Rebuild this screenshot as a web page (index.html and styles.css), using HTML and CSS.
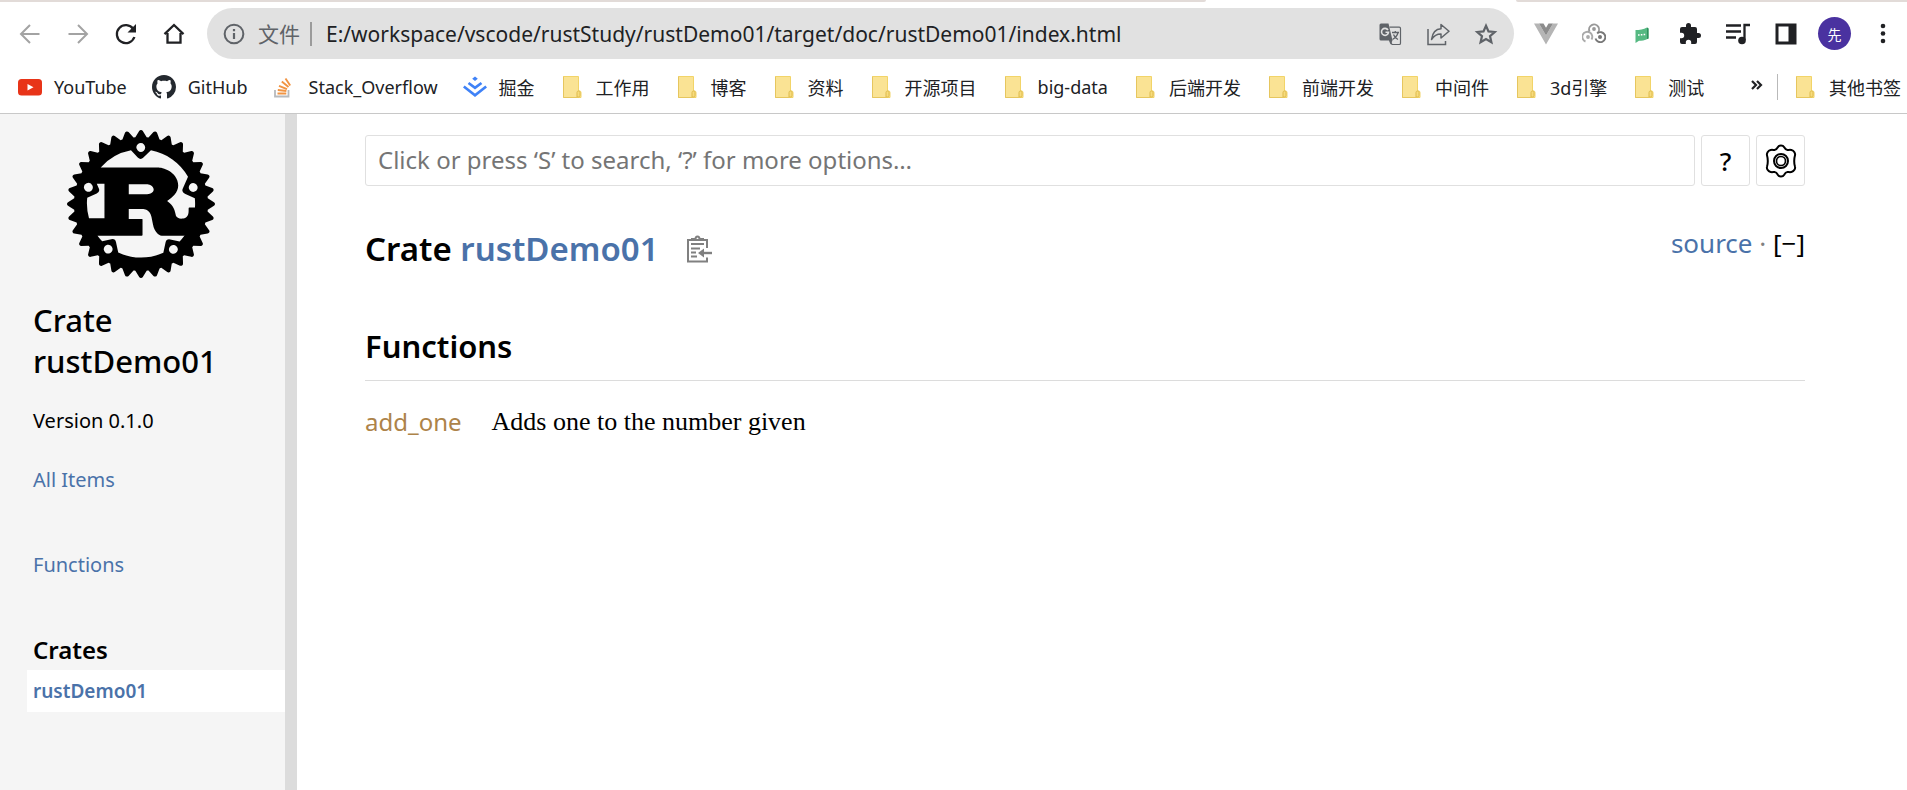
FILE: index.html
```html
<!DOCTYPE html>
<html lang="zh-CN">
<head>
<meta charset="utf-8">
<title>rustDemo01 - Rust</title>
<link rel="stylesheet" href="styles.css">
</head>
<body>
<svg class="sprite" aria-hidden="true">
  <symbol id="folder" viewBox="0 0 24 24"><path d="M3.5 1.500h15v14.500c2-.5 2.500.5 2.500 2v4.500h-17.500z" fill="#fae394" stroke="#f2d468"/><path d="M17 22v-4.500c0-2 3-2 3 0v3c0 1-.8 1.500-1.500 1.500z" fill="#f7dc7c" stroke="#dfba4d"/><path d="M3.500 1.500v21h14" fill="none" stroke="#e6c65e"/></symbol>
</svg>

<header class="browser">
  <div class="tabstrip"><span class="tab-rest"></span><span class="tab-active"></span><span class="tab-tail"></span></div>
  <div class="toolbar">
    <nav class="nav-buttons" aria-label="导航">
      <button class="icon-btn" aria-label="后退"><svg viewBox="0 0 24 24"><path d="M21.500 12H3M12 3l-9 9 9 9" fill="none" stroke="#a3a3a3" stroke-width="2"/></svg></button>
      <button class="icon-btn" aria-label="前进"><svg viewBox="0 0 24 24"><path d="M2.500 12H21M12 3l9 9-9 9" fill="none" stroke="#a3a3a3" stroke-width="2"/></svg></button>
      <button class="icon-btn" aria-label="刷新"><svg viewBox="0 0 24 24"><path d="M19.300 7A9 9 0 1 0 20.400 15" fill="none" stroke="#202124" stroke-width="2.300"/><path d="M22 2v8.500h-8.500z" fill="#202124"/></svg></button>
      <button class="icon-btn" aria-label="主页"><svg viewBox="0 0 24 24"><path d="M5.500 11v9.700h13V11M2.500 12.200 12 3l9.500 9.200" fill="none" stroke="#202124" stroke-width="2.300"/></svg></button>
    </nav>
    <div class="omnibox">
      <svg class="info" viewBox="0 0 24 24"><circle cx="12" cy="12" r="10.200" fill="none" stroke="#5f6368" stroke-width="2.200"/><path d="M12 11v6.500M12 6.500v2.500" stroke="#5f6368" stroke-width="2.400"/></svg>
      <label class="scheme" for="url">文件</label>
      <input class="url" id="url" type="text" value="E:/workspace/vscode/rustStudy/rustDemo01/target/doc/rustDemo01/index.html">
      <button class="icon-btn" aria-label="翻译"><svg viewBox="0 0 24 24"><path d="M11.500 5.200H21.200a1.300 1.300 0 0 1 1.300 1.300v14.700a1.300 1.300 0 0 1-1.300 1.300H14l-2-4" fill="none" stroke="#5f6368" stroke-width="1.200"/><path d="M3 1.500h7.500l4 17H3A1.500 1.500 0 0 1 1.500 17V3A1.500 1.500 0 0 1 3 1.500zM11 18.500h3.500l-2 4z" fill="#5f6368"/><path d="M10 8a3.500 3.500 0 1 0 .5 2.200H7.500" fill="none" stroke="#e1e1e1" stroke-width="1.600"/><path d="M14 10.500h7M17.300 9v1.500M20 10.500c-.7 3.500-3 5.500-5.500 7M15.500 12.500c.8 2.200 2.500 4 4.500 5" fill="none" stroke="#5f6368" stroke-width="1.300"/></svg></button>
      <button class="icon-btn" aria-label="分享"><svg viewBox="0 0 24 24"><path d="M2 7v15.500h17.500V19" fill="none" stroke="#5f6368" stroke-width="1.500"/><path d="M15 2.500v4.300C9.500 7 6.500 10.500 5.500 17.500c2.500-4 5.500-5.500 9.500-5.500v4l8-6.800z" fill="none" stroke="#5f6368" stroke-width="1.500" stroke-linejoin="round"/></svg></button>
      <button class="icon-btn" aria-label="收藏"><svg viewBox="0 0 24 24"><path d="M12 3.700l2.500 5.700 6.200.6-4.700 4.100 1.400 6.100L12 17l-5.400 3.200L8 14.100 3.300 10l6.200-.6z" fill="none" stroke="#5f6368" stroke-width="2.200"/></svg></button>
    </div>
    <div class="extensions">
      <button class="icon-btn" aria-label="Vue"><svg viewBox="0 0 24 24"><path d="M0 1.500h5L12 13.500l7-12h5L12 22.500z" fill="#b5b5b5"/><path d="M5 1.500h4.500L12 5.800l2.500-4.300H19l-7 12z" fill="#8c8c8c"/></svg></button>
      <button class="icon-btn" aria-label="扩展"><svg viewBox="0 0 24 24"><g fill="none" stroke-width="1.900"><path d="M3.500 19.500a5 5 0 1 1 6-2" stroke="#aaa"/><path d="M7.500 9.500a5 5 0 1 1 7.500 2" stroke="#999"/><path d="M15.500 11a5 5 0 1 1-2 5.500" stroke="#777"/></g><circle cx="6" cy="15" r="1.900" fill="#aaa"/><circle cx="12" cy="7" r="1.900" fill="#999"/><circle cx="18" cy="15" r="2" fill="#777"/></svg></button>
      <button class="icon-btn" aria-label="聊天"><svg viewBox="0 0 24 24"><path d="M5.500 8c4 0 8-.5 11.500-2.500l1.500 1v10c-4 2-7 2.300-9.500 2.300L5.500 21z" fill="#55b982"/><path d="M17 5.500l1.500 1v10l-1.500.5z" fill="#2f8f5d"/><path d="M8 13h1.600m1.200-.2h1.600m1.200-.3h1.600" stroke="#fff" stroke-width="1.500"/></svg></button>
      <button class="icon-btn" aria-label="扩展程序"><svg viewBox="0 0 24 24"><path d="M20.500 11H19V7a2 2 0 0 0-2-2h-4V3.500a2.500 2.500 0 0 0-5 0V5H4a2 2 0 0 0-2 2v3.800h1.500a2.700 2.700 0 0 1 0 5.400H2V20a2 2 0 0 0 2 2h3.800v-1.500a2.700 2.700 0 0 1 5.400 0V22H17a2 2 0 0 0 2-2v-4h1.500a2.500 2.500 0 0 0 0-5z" fill="#202124"/></svg></button>
      <button class="icon-btn" aria-label="媒体控制"><svg viewBox="0 0 24 24"><path d="M0 3.500h15M0 9.500h15M0 15.500h10M24 3h-5.500v15" fill="none" stroke="#202124" stroke-width="2.300"/><circle cx="16" cy="18.500" r="3.800" fill="#202124"/></svg></button>
      <button class="icon-btn" aria-label="侧边栏"><svg viewBox="0 0 24 24"><path d="M1.500 1.500h21v21h-21zM4.500 4.500v15h10v-15z" fill="#202124" fill-rule="evenodd"/></svg></button>
      <button class="avatar" aria-label="个人资料">先</button>
      <button class="icon-btn" aria-label="菜单"><svg viewBox="0 0 24 24" fill="#202124"><circle cx="12" cy="4" r="2.300"/><circle cx="12" cy="11.500" r="2.300"/><circle cx="12" cy="19" r="2.300"/></svg></button>
    </div>
  </div>
  <nav class="bookmarks" aria-label="书签">
    <a class="bookmark" href="#"><svg viewBox="0 0 24 24"><rect y="4" width="24" height="16.500" rx="3.500" fill="#e83418"/><path d="M9.500 9v6.500l6-3.200z" fill="#fff"/></svg>YouTube</a>
    <a class="bookmark" href="#"><svg viewBox="0 0 16 16"><path d="M8 0C3.580 0 0 3.580 0 8c0 3.540 2.290 6.530 5.470 7.590.4.070.55-.17.550-.38 0-.19-.01-.82-.01-1.490-2.010.37-2.530-.49-2.690-.94-.09-.23-.48-.94-.82-1.130-.28-.15-.68-.52-.01-.53.630-.01 1.080.58 1.230.82.720 1.210 1.870.87 2.330.66.070-.52.280-.87.510-1.070-1.780-.2-3.640-.89-3.640-3.950 0-.87.310-1.590.82-2.150-.08-.2-.36-1.020.08-2.120 0 0 .67-.21 2.200.82.640-.18 1.320-.27 2-.27s1.360.09 2 .27c1.530-1.040 2.200-.82 2.200-.82.440 1.100.160 1.920.080 2.120.510.560.820 1.270.820 2.150 0 3.070-1.870 3.750-3.650 3.950.290.250.540.730.540 1.480 0 1.070-.01 1.930-.01 2.200 0 .21.150.46.550.38A8.010 8.010 0 0 0 16 8c0-4.420-3.580-8-8-8z" fill="#24292f"/></svg>GitHub</a>
    <a class="bookmark" href="#"><svg viewBox="0 0 24 24"><path d="M2 15v6.500h13.500V15" fill="none" stroke="#b7babd" stroke-width="1.800"/><path d="M4.500 18.500h8.800M4.800 15l8.600 1M6 10.800l8 3.400M8.800 6.500l6.700 5.500M12.500 3.500l4.700 7" stroke="#f19443" stroke-width="1.900"/></svg>Stack_Overflow</a>
    <a class="bookmark" href="#"><svg viewBox="0 0 24 24"><path d="M12 1.500l2.800 2.200L12 6 9.200 3.700z" fill="#3f82f7"/><path d="M5.500 8l6.500 4.800L18.500 8M.8 11.500l11.200 8.800 11.200-8.800" fill="none" stroke="#3f82f7" stroke-width="2.700"/></svg>掘金</a>
    <a class="bookmark" href="#"><svg><use href="#folder"/></svg>工作用</a>
    <a class="bookmark" href="#"><svg><use href="#folder"/></svg>博客</a>
    <a class="bookmark" href="#"><svg><use href="#folder"/></svg>资料</a>
    <a class="bookmark" href="#"><svg><use href="#folder"/></svg>开源项目</a>
    <a class="bookmark" href="#"><svg><use href="#folder"/></svg>big-data</a>
    <a class="bookmark" href="#"><svg><use href="#folder"/></svg>后端开发</a>
    <a class="bookmark" href="#"><svg><use href="#folder"/></svg>前端开发</a>
    <a class="bookmark" href="#"><svg><use href="#folder"/></svg>中间件</a>
    <a class="bookmark" href="#"><svg><use href="#folder"/></svg>3d引擎</a>
    <a class="bookmark" href="#"><svg><use href="#folder"/></svg>测试</a>
    <div class="bookmarks-end">
      <button class="icon-btn" aria-label="更多书签"><svg viewBox="0 0 24 24"><path d="M7 6l4 4-4 4M12 6l4 4-4 4" fill="none" stroke="#202124" stroke-width="2.200"/></svg></button>
      <a class="bookmark other" href="#"><svg><use href="#folder"/></svg>其他书签</a>
    </div>
  </nav>
</header>

<div class="page">
  <nav class="sidebar" aria-label="Crate">
    <a class="logo" href="#" aria-label="Rust"><svg viewBox="0 0 24 24"><path d="M23.8346 11.7033l-1.0073-.6236a13.7268 13.7268 0 00-.0283-.2936l.8656-.8069a.3483.3483 0 00-.1154-.578l-1.1066-.414a8.4958 8.4958 0 00-.087-.2856l.6904-.9587a.3462.3462 0 00-.2257-.5446l-1.1663-.1894a9.3574 9.3574 0 00-.1407-.2622l.49-1.0761a.3437.3437 0 00-.0274-.3361.3486.3486 0 00-.3006-.154l-1.1845.0416a6.7444 6.7444 0 00-.1873-.2268l.2723-1.153a.3472.3472 0 00-.417-.4172l-1.1532.2724a14.0183 14.0183 0 00-.2278-.1873l.0415-1.1845a.3442.3442 0 00-.49-.328l-1.076.491c-.0872-.0476-.1742-.0952-.2623-.1407l-.1903-1.1673A.3483.3483 0 0016.256.955l-.9597.6905a8.4867 8.4867 0 00-.2855-.086l-.414-1.1066a.3483.3483 0 00-.5781-.1154l-.8069.8666a9.2936 9.2936 0 00-.2936-.0284L12.2946.1683a.3462.3462 0 00-.5892 0l-.6236 1.0073a13.7383 13.7383 0 00-.2936.0284L9.9803.3374a.3462.3462 0 00-.578.1154l-.4141 1.1065c-.0962.0274-.1903.0567-.2855.086L7.744.955a.3483.3483 0 00-.5447.2258L7.009 2.348a9.3574 9.3574 0 00-.2622.1407l-1.0762-.491a.3462.3462 0 00-.49.328l.0416 1.1845a7.9826 7.9826 0 00-.2278.1873L3.8413 3.425a.3472.3472 0 00-.4171.4171l.2713 1.1531c-.0628.075-.1255.1509-.1863.2268l-1.1845-.0415a.3462.3462 0 00-.328.49l.491 1.0761a9.167 9.167 0 00-.1407.2622l-1.1662.1894a.3483.3483 0 00-.2258.5446l.6904.9587a13.303 13.303 0 00-.087.2855l-1.1065.414a.3483.3483 0 00-.1155.5781l.8656.807a9.2936 9.2936 0 00-.0283.2935l-1.0073.6236a.3442.3442 0 000 .5892l1.0073.6236c.008.0982.0182.1964.0283.2936l-.8656.8079a.3462.3462 0 00.1155.578l1.1065.4141c.0273.0962.0567.1914.087.2855l-.6904.9587a.3452.3452 0 00.2268.5447l1.1662.1893c.0456.088.0922.1751.1408.2622l-.491 1.0762a.3462.3462 0 00.328.49l1.1834-.0415c.0618.0769.1235.1528.1873.2277l-.2713 1.1541a.3462.3462 0 00.4171.4161l1.153-.2713c.075.0638.151.1255.2279.1863l-.0415 1.1845a.3442.3442 0 00.49.327l1.0761-.49c.087.0486.1741.0951.2622.1407l.1903 1.1662a.3483.3483 0 00.5447.2268l.9587-.6904a9.299 9.299 0 00.2855.087l.414 1.1066a.3452.3452 0 00.5781.1154l.8079-.8656c.0972.0111.1954.0203.2936.0294l.6236 1.0073a.3472.3472 0 00.5892 0l.6236-1.0073c.0982-.0091.1964-.0183.2936-.0294l.8069.8656a.3483.3483 0 00.578-.1154l.4141-1.1066a8.4626 8.4626 0 00.2855-.087l.9587.6904a.3452.3452 0 00.5447-.2268l.1903-1.1662c.088-.0456.1751-.0931.2622-.1407l1.0762.49a.3472.3472 0 00.49-.327l-.0415-1.1845a6.7267 6.7267 0 00.2267-.1863l1.1531.2713a.3472.3472 0 00.4171-.416l-.2713-1.1542c.0628-.0749.1255-.1508.1863-.2278l1.1845.0415a.3442.3442 0 00.328-.49l-.49-1.076c.0475-.0872.0951-.1742.1407-.2623l1.1662-.1893a.3483.3483 0 00.2258-.5447l-.6904-.9587.087-.2855 1.1066-.414a.3462.3462 0 00.1154-.5781l-.8656-.8079c.0101-.0972.0202-.1954.0283-.2936l1.0073-.6236a.3442.3442 0 000-.5892zm-6.7413 8.3551a.7138.7138 0 01.2986-1.396.714.714 0 11-.2997 1.396zm-.3422-2.3142a.649.649 0 00-.7715.5l-.3573 1.6685c-1.1035.501-2.3285.7795-3.6193.7795a8.7368 8.7368 0 01-3.6951-.814l-.3574-1.6684a.648.648 0 00-.7714-.499l-1.473.3158a8.7216 8.7216 0 01-.7613-.898h7.1676c.081 0 .1356-.0141.1356-.088v-2.536c0-.074-.0536-.0881-.1356-.0881h-2.0966v-1.6077h2.2677c.2065 0 1.1065.0587 1.394 1.2088.0901.3533.2875 1.5044.4232 1.8729.1346.413.6833 1.2381 1.2685 1.2381h3.5716a.7492.7492 0 00.1296-.0131 8.7874 8.7874 0 01-.8119.9526zM6.8369 20.024a.714.714 0 11-.2997-1.396.714.714 0 01.2997 1.396zM4.1177 8.9972a.7137.7137 0 11-1.304.5791.7137.7137 0 011.304-.579zm-.8352 1.9813l1.5347-.6824a.65.65 0 00.33-.8585l-.3158-.7147h1.2432v5.6025H3.5669a8.7753 8.7753 0 01-.2834-3.348zm6.7343-.5437V8.7836h2.9601c.153 0 1.0792.1772 1.0792.8697 0 .575-.7107.7815-1.2948.7815zm10.7574 1.4862c0 .2187-.008.4363-.0243.651h-.9c-.09 0-.1265.0586-.1265.1477v.413c0 .973-.5487 1.1846-1.0296 1.2382-.4576.0517-.9648-.1913-1.0275-.4717-.2704-1.5186-.7198-1.8436-1.4305-2.4034.8817-.5599 1.799-1.386 1.799-2.4915 0-1.1936-.819-1.9458-1.3769-2.3153-.7825-.5163-1.6491-.6195-1.883-.6195H5.4682a8.7651 8.7651 0 014.907-2.7699l1.0974 1.151a.648.648 0 00.9182.0213l1.227-1.1743a8.7753 8.7753 0 016.0044 4.2762l-.8403 1.8982a.652.652 0 00.33.8585l1.6178.7188c.0283.2875.0425.577.0425.8717zm-9.3006-9.5993a.7128.7128 0 11.984 1.0316.7137.7137 0 01-.984-1.0316zm8.3389 6.71a.7107.7107 0 01.9395-.3625.7137.7137 0 11-.9405.3635z"/></svg></a>
    <h2 class="crate-name"><a href="#">Crate rustDemo01</a></h2>
    <ul class="side-list">
      <li class="version">Version 0.1.0</li>
      <li><a href="#">All Items</a></li>
    </ul>
    <ul class="side-list sections">
      <li><a href="#functions">Functions</a></li>
    </ul>
    <h3 class="crates-title">Crates</h3>
    <a class="current-crate" href="#">rustDemo01</a>
  </nav>
  <div class="resizer"></div>
  <main class="content">
    <form class="search">
      <input class="search-input" type="search" aria-label="Search" placeholder="Click or press ‘S’ to search, ‘?’ for more options…">
      <button class="square-btn" type="button" aria-label="Help">?</button>
      <button class="square-btn" type="button" aria-label="Settings"><svg viewBox="0 0 34 34" fill="none" stroke="#000"><path d="M17 1.500c1.300 0 2.500.5 3.200 1.800.8 1.600 1.800 2.500 3.300 2.600 1.300.1 2.500-.2 3.900.1 2.600.6 4.300 3.300 3.500 5.800-.5 1.700-.7 3.200-.7 5.200s.2 3.500.7 5.200c.8 2.500-.9 5.200-3.500 5.800-1.400.3-2.600 0-3.900.1-1.500.1-2.500 1-3.300 2.600-.7 1.300-1.900 1.800-3.200 1.800s-2.500-.5-3.200-1.800c-.8-1.600-1.800-2.500-3.300-2.600-1.300-.1-2.500.2-3.900-.1-2.600-.6-4.300-3.300-3.500-5.800.5-1.700.7-3.200.7-5.200s-.2-3.500-.7-5.200c-.8-2.500.9-5.200 3.500-5.800 1.400-.3 2.600 0 3.900-.1 1.500-.1 2.500-1 3.300-2.600.7-1.300 1.900-1.800 3.200-1.800z" stroke-width="2"/><circle cx="17" cy="17" r="7" stroke-width="2"/><circle cx="17" cy="17" r="4.500" stroke-width="1.700"/></svg></button>
    </form>
    <div class="heading">
      <h1 class="title">Crate <a href="#">rustDemo01</a></h1>
      <button class="copy" aria-label="Copy item path"><svg viewBox="0 0 26 28" fill="none" stroke="#808080" stroke-width="2"><path d="M21 13V5H2v21.500h19V22.500M5 9h13"/><path d="M6 5.500V4h3.500c0-3.500 4-3.500 4 0H17v1.500"/><path d="M5 13.500h9M5 17.500h5M5 21.500h6" stroke-width="1.800"/><path d="M26 18h-9" stroke-width="2.400"/><path d="M18 13.500L12 18l6 4.500z" fill="#808080" stroke="none"/></svg></button>
      <div class="out-of-band"><a href="#">source</a> · <button class="toggle">[<span>−</span>]</button></div>
    </div>
    <h2 class="section-title" id="functions">Functions</h2>
    <ul class="items">
      <li class="item"><a href="#">add_one</a><span class="desc">Adds one to the number given</span></li>
    </ul>
  </main>
</div>
</body>
</html>
```
FILE: styles.css
```css
* { box-sizing: border-box; }
body {
  margin: 0;
  min-height: 100vh;
  display: flex;
  flex-direction: column;
  background: #fff;
  color: #000;
  font-family: "Noto Sans", "Noto Sans CJK SC", sans-serif;
}
a { color: #4a72a9; text-decoration: none; }
button { border: 0; padding: 0; background: none; font: inherit; color: inherit; cursor: pointer; }
ul { margin: 0; padding: 0; list-style: none; }
svg { display: block; }
.sprite { width: 0; height: 0; position: absolute; }

.browser { border-bottom: 1px solid #c8c8c8; color: #202124; }
.tabstrip { display: flex; height: 2px; }
.tab-rest { flex: 1206; background: #e2dbd8; border-bottom-right-radius: 2px; }
.tab-active { flex: 310; }
.tab-tail { flex: 391; background: #e2dbd8; border-bottom-left-radius: 2px; }
.toolbar { display: flex; align-items: center; height: 63px; padding: 0 12px 0 18px; }
.nav-buttons { display: flex; gap: 24px; }
.icon-btn { width: 24px; height: 24px; flex: none; }
.icon-btn svg { width: 24px; height: 24px; }
.omnibox {
  flex: 1;
  display: flex;
  align-items: center;
  height: 51px;
  margin: 0 20px 0 21px;
  padding: 0 16px;
  border-radius: 26px;
  background: #e1e1e1;
  font-size: 21px;
}
.omnibox .icon-btn { margin-left: 24px; }
.info { width: 22px; height: 22px; margin-right: 13px; }
.scheme { color: #5f6368; padding-right: 10px; border-right: 2px solid #9b9b9b; line-height: 24px; }
.url {
  flex: 1;
  min-width: 0;
  border: 0;
  outline: 0;
  background: none;
  padding: 0 14px;
  font: inherit;
  color: #202124;
}
.extensions { display: flex; align-items: center; gap: 24px; }
.avatar { width: 33px; height: 33px; margin: 0 -4px; border-radius: 50%; background: #4a32a0; color: #fff; font-size: 14px; }
.bookmarks { display: flex; align-items: center; gap: 25px; height: 48px; padding: 0 6px 4px 18px; font-size: 18px; }
.bookmark { display: flex; align-items: center; gap: 12px; flex: none; color: #202124; white-space: nowrap; }
.bookmark svg { width: 24px; height: 24px; }
.bookmarks-end { display: flex; align-items: center; gap: 8px; margin-left: auto; }
.other { padding-left: 15px; border-left: 1px solid #b9b9b9; }

.page { flex: 1; display: flex; }
.sidebar { width: 285px; flex: none; background: #f5f5f5; padding: 16px 0 0 33px; font-size: 20px; }
.resizer { width: 12px; flex: none; background: #dcdcdc; }
.logo { display: block; width: 148px; margin: 0 0 22px 34px; }
.logo svg { width: 148px; height: 148px; }
.crate-name { margin: 0; font-size: 31px; font-weight: 500; line-height: 41px; max-width: 220px; }
.crate-name a { color: #000; }
.side-list { line-height: 29px; }
.side-list li + li { margin-top: 30px; }
.version { margin-top: 24px; }
.sections { margin-top: 56px; }
.crates-title { margin: 56px 0 6px; font-size: 24px; font-weight: 600; line-height: 29px; }
.current-crate { display: block; margin-left: -6px; padding: 0 6px; line-height: 42px; background: #fff; font-size: 19px; font-weight: 600; }

.content { flex: 1; min-width: 0; padding: 21px 102px 60px 68px; font-size: 24px; }
.search { display: flex; gap: 6px; }
.search-input, .square-btn { height: 51px; border: 1px solid #e0e0e0; border-radius: 3px; background: #fff; }
.search-input { flex: 1; min-width: 0; padding: 0 12px 3px; font: inherit; outline: 0; }
.search-input::placeholder { color: #757575; }
.square-btn { width: 49px; display: flex; align-items: center; justify-content: center; font-size: 26px; font-weight: 500; }
.square-btn svg { width: 34px; height: 34px; }
.heading { display: flex; align-items: center; margin-top: 36px; }
.title { margin: 0; font-size: 33px; font-weight: 600; line-height: 54px; }
.copy { margin-left: 27px; }
.copy svg { width: 26px; height: 28px; }
.out-of-band { margin-left: auto; font-size: 26px; line-height: 42px; align-self: flex-start; color: #808080; }
.toggle { color: #000; }
.section-title { margin: 48px 0 26px; padding-bottom: 12px; border-bottom: 1px solid #dcdcdc; font-size: 31px; font-weight: 600; line-height: 44px; }
.item { display: flex; gap: 30px; line-height: 30px; }
.item a { color: #ad8349; }
.desc { font-family: "Liberation Serif", serif; font-size: 26px; }
```
